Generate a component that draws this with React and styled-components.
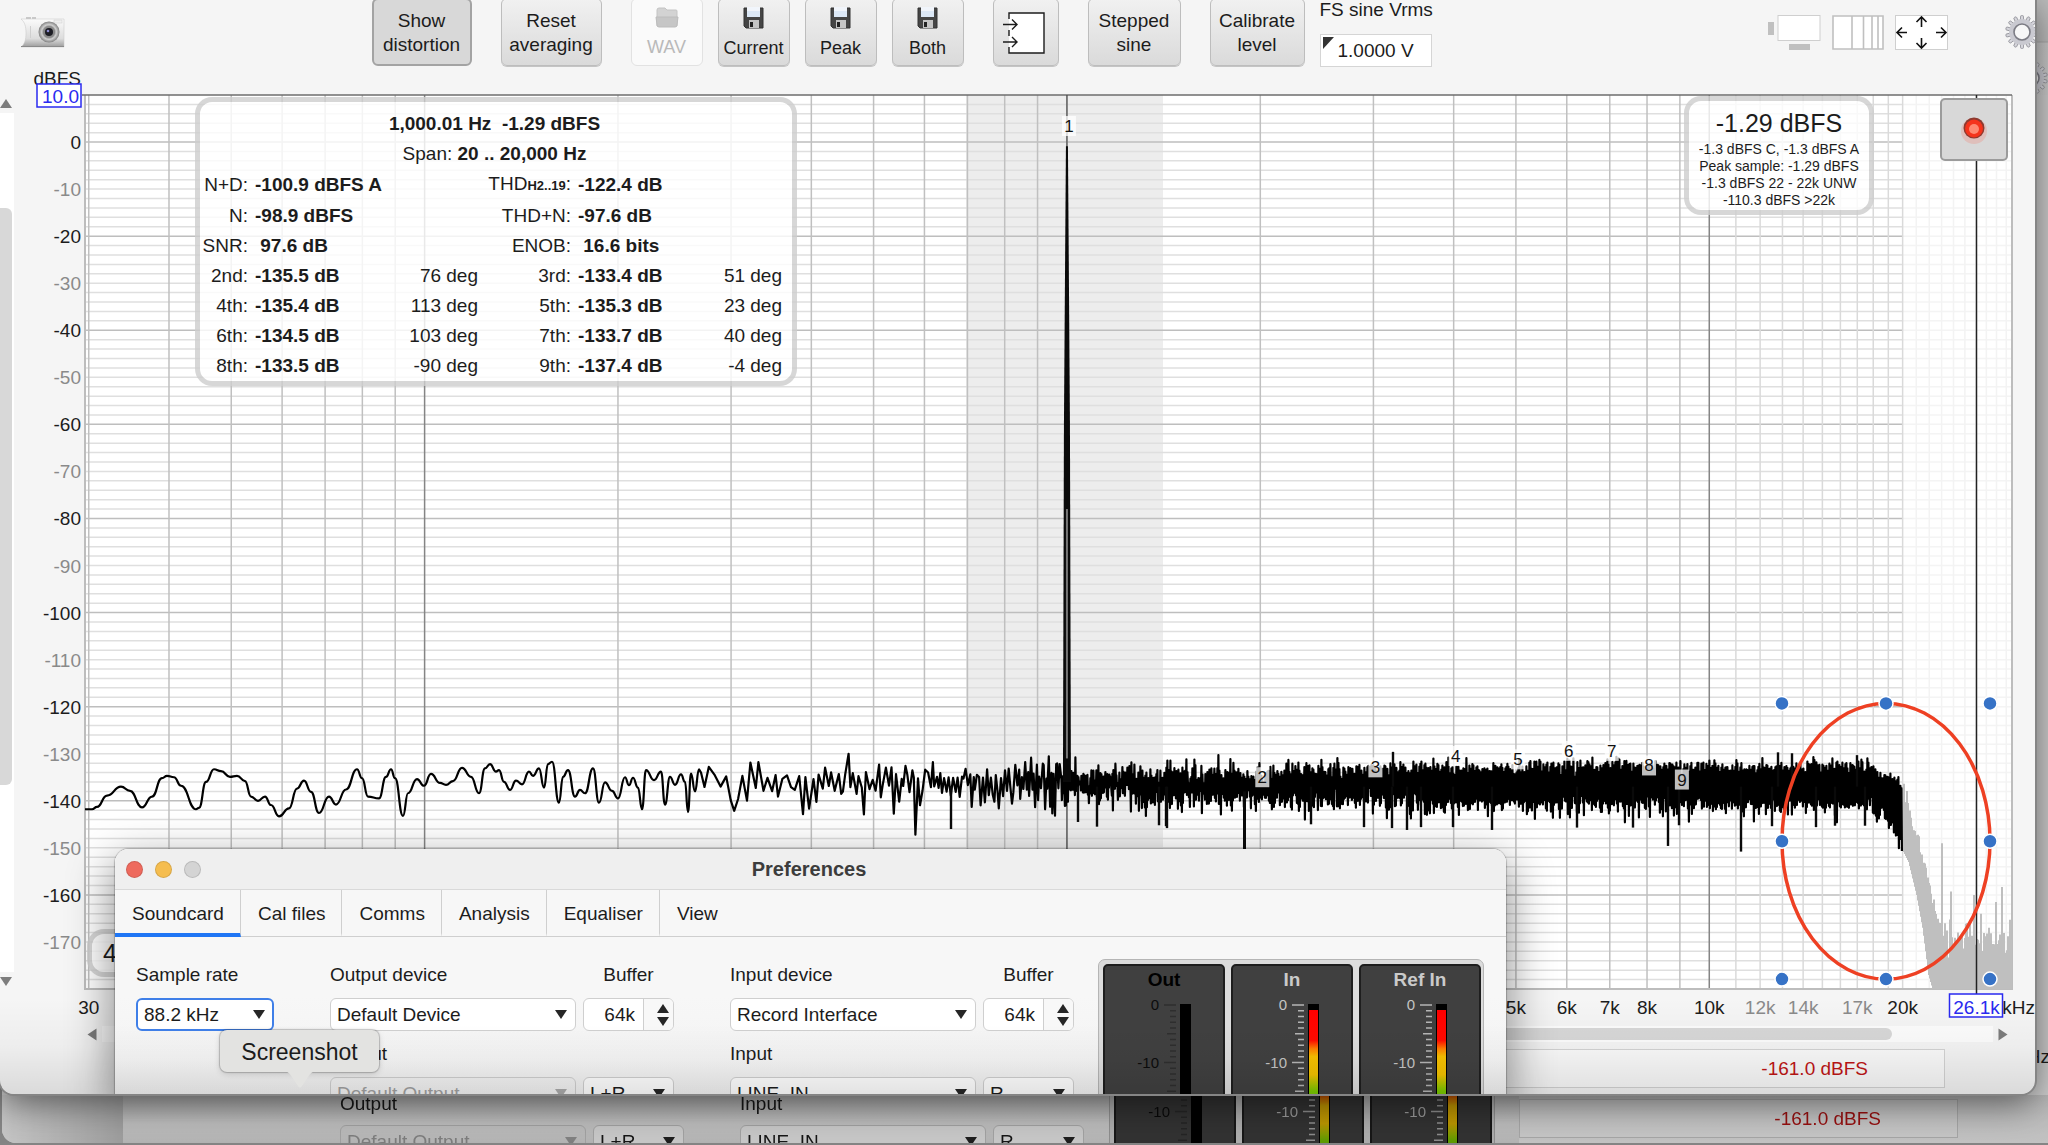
import React, { useEffect, useMemo, useRef, useState } from 'react'

import styled, { createGlobalStyle } from 'styled-components'

const GlobalStyle = createGlobalStyle`
  * {
    box-sizing: border-box;
  }
  body {
    margin: 0;
    overflow: hidden;
    background: #8c8c8c;
  }
  body, button, input, select {
    font-family: "Liberation Sans", Arial, sans-serif;
    font-size: 19px;
    color: #1c1c1c;
  }
  button {
    padding: 0;
  }
`

/* ---------- desktop and windows ---------- */

const Desktop = styled.div`
  position: relative;
  height: 100vh;
  overflow: hidden;
  background: #858585;
`

const RearWindow = styled.section`
  position: absolute;
  top: 0;
  left: 2px;
  right: 0;
  bottom: 2px;
  display: flex;
  flex-direction: column;
  justify-content: space-between;
  background: #cdcdcd;
  border-bottom-left-radius: 14px;
  overflow: hidden;
`

const RearTop = styled.div`
  align-self: flex-end;
  display: flex;
  flex-direction: column;
  align-items: flex-end;
  width: 40px;
  padding-top: 61px;
  background: linear-gradient(#bdbdbd 41px, #a9a9a9 42px, #c8c8c8 43px, #cdcdcd 120px);
`

const RearUnit = styled.div`
  position: absolute;
  right: -2px;
  bottom: 74px;
  line-height: 24px;
`

const RearStrip = styled.div`
  display: flex;
  height: 48px;
  overflow: hidden;
  filter: brightness(.78);
`

const RearCorner = styled.div`
  width: 121px;
  background: linear-gradient(to right, #fdfdfd, #c9c9c9);
`

const RearPreferences = styled.div`
  width: calc(100% - 650px);
  background: linear-gradient(#d8d8d8, #f2f2f2 60%, #e6e6e6);
`

const RearStatus = styled.div`
  flex: 1;
  padding: 4px 90px 0 0;
  background: linear-gradient(#e9e9e9, #fafafa);
`

const FrontWindow = styled.main`
  position: absolute;
  top: 0;
  left: 0;
  right: 13px;
  bottom: 51px;
  display: flex;
  flex-direction: column;
  background: #f5f5f5;
  border-radius: 0 0 14px 14px;
  overflow: hidden;
`

const WindowShadow = styled.div`
  position: absolute;
  top: 0;
  left: 0;
  right: 13px;
  bottom: 51px;
  border-radius: 0 0 14px 14px;
  box-shadow: 0 0 0 2px #858585, 0 8px 36px rgba(0, 0, 0, .55);
`

const Shade = styled.div`
  position: absolute;
  left: 0;
  right: 0;
  bottom: 0;
  height: ${p => p.$h}px;
  pointer-events: none;
  background: linear-gradient(transparent, rgba(0, 0, 0, .03) 50%, rgba(0, 0, 0, .11));
`

/* ---------- toolbar ---------- */

const Toolbar = styled.header`
  display: flex;
  height: 68px;
  padding-left: 21px;
  flex: none;
`

const PlainButton = styled.button`
  display: block;
  border: 0;
  background: none;
  line-height: 0;
`

const CameraButton = styled(PlainButton)`
  padding-top: 14px;
  align-self: flex-start;
`

const Tools = styled.div`
  display: flex;
  flex: 1;
  justify-content: center;
  gap: 29px;
  padding-right: 30px;
`

const SaveTools = styled.div`
  display: flex;
  gap: 15px;
`

const ToolButton = styled.button`
  display: flex;
  flex-direction: column;
  align-items: center;
  justify-content: center;
  width: ${p => p.$w}px;
  height: 68px;
  margin-top: -2px;
  padding-top: 2px;
  line-height: 24px;
  font-size: ${p => (p.$small ? 18 : 19)}px;
  border: ${p => (p.$on ? '2px solid #a3a3a3' : '1px solid #bdbdbd')};
  border-radius: 6px;
  background: ${p => (p.$on ? '#d8d8d8' : 'linear-gradient(#f1f1f1, #dadada)')};
  box-shadow: ${p => (p.$on ? 'none' : '0 1px 0 #c4c4c4')};
  &:disabled {
    color: #b9b9b9;
    background: #fafafa;
    border-color: #e2e2e2;
    box-shadow: none;
  }
  svg {
    margin-bottom: 7px;
  }
`

const IconOnly = styled(ToolButton)`
  padding-right: 4px;
  svg {
    margin: 0;
  }
`

const Vrms = styled.label`
  display: flex;
  flex-direction: column;
  justify-content: space-between;
  width: 112px;
  height: 67px;
  margin-left: -14px;
  line-height: 20px;
  white-space: nowrap;
`

const VrmsField = styled.span`
  display: block;
  position: relative;
  height: 33px;
  svg {
    position: absolute;
    left: 3px;
    top: 3px;
  }
`

const VrmsInput = styled.input`
  width: 100%;
  height: 33px;
  padding: 0 0 0 17px;
  border: 1px solid #d5d5d5;
  background: #fff;
`

const ViewTools = styled.div`
  display: flex;
  align-items: flex-start;
  gap: 11px;
  padding-top: 15px;
`

const GearButton = styled(PlainButton)`
  margin-left: 46px;
  width: 30px;
  overflow: hidden;
`

/* ---------- chart ---------- */

const ChartRow = styled.div`
  display: flex;
  flex: 1;
  min-height: 0;
`

const VScroll = styled.div`
  display: flex;
  flex-direction: column;
  width: 14px;
  padding: 31px 0 36px;
`

const VTrack = styled.div`
  flex: 1;
  margin: 5px 0;
  padding: 95px 2px 187px 0;
  background: #fff;
`

const Thumb = styled.div`
  height: 100%;
  width: 100%;
  border-radius: ${p => p.$radius};
  background: #d8d8d8;
`

const ChartArea = styled.div`
  position: relative;
  flex: 1;
  min-width: 0;
  svg {
    display: block;
  }
`

const Panel = styled.div`
  position: absolute;
  border: 5px solid rgba(205, 205, 205, .8);
  border-radius: 17px;
  background: rgba(255, 255, 255, .82);
  background-clip: padding-box;
`

const DistortionPanel = styled(Panel)`
  top: 29px;
  left: 181px;
  width: 602px;
  padding: 7px 10px 0 0;
`

const DistortionTable = styled.table`
  width: 100%;
  border-collapse: collapse;
  table-layout: fixed;
  white-space: nowrap;
  th, td {
    height: 30px;
    padding: 0;
    font-weight: 400;
    line-height: 30px;
    text-align: right;
  }
  caption {
    line-height: 30px;
    padding-left: 7px;
  }
  td.value {
    padding-left: 7px;
    font-weight: 700;
    text-align: left;
  }
  small {
    font-size: 13px;
    font-weight: 700;
  }
`

const LevelPanel = styled(Panel)`
  top: 28px;
  right: 161px;
  width: 190px;
  height: 119px;
  padding-top: 5px;
  text-align: center;
  font-size: 14px;
  line-height: 17px;
  white-space: nowrap;
  strong {
    display: block;
    font-size: 25px;
    font-weight: 400;
    line-height: 35px;
  }
`

const LegendPanel = styled(Panel)`
  left: 73px;
  bottom: 45px;
  width: 120px;
  height: 48px;
  padding-left: 11px;
  font-size: 25px;
  line-height: 38px;
`

const RecordButton = styled.button`
  position: absolute;
  top: 30px;
  right: 27px;
  width: 68px;
  height: 63px;
  border: 2px solid #9b9b9b;
  border-radius: 5px;
  background: #d8d8d8;
  svg {
    margin: 0 auto;
  }
`

const HScroll = styled.div`
  display: flex;
  align-items: center;
  gap: 4px;
  height: 24px;
  padding: 0 26px 0 86px;
  flex: none;
`

const HTrack = styled.div`
  flex: 1;
  height: 16px;
  padding: 2px 101px 2px 60px;
  background: #fdfdfd;
`

const StatusBar = styled.footer`
  flex: none;
  height: 48px;
  padding: 3px 90px 0 160px;
`

const StatusField = styled.output`
  display: flex;
  align-items: center;
  justify-content: flex-end;
  height: 39px;
  padding-right: 76px;
  border: 1px solid #d4d4d4;
  background: rgba(255, 255, 255, .6);
  color: #c01515;
`

/* ---------- preferences ---------- */

const PreferencesWindow = styled.section`
  position: absolute;
  left: 115px;
  right: 529px;
  bottom: 0;
  height: 245px;
  border-radius: 14px 14px 0 0;
  background: linear-gradient(#f7f7f7 60%, #f2f2f2);
  box-shadow: 0 0 1px 1px rgba(0, 0, 0, .22), 0 16px 44px 4px rgba(0, 0, 0, .42);
`

const TitleBar = styled.div`
  display: flex;
  align-items: center;
  height: 41px;
  padding-left: 11px;
  gap: 12px;
  border-bottom: 1px solid #d9d9d9;
  border-radius: 14px 14px 0 0;
  background: #efefef;
`

const Light = styled.button`
  width: 17px;
  height: 17px;
  border: 1px solid rgba(0, 0, 0, .12);
  border-radius: 50%;
  background: ${p => p.$color};
`

const WindowTitle = styled.h2`
  flex: 1;
  margin: 0;
  padding-right: 101px;
  text-align: center;
  font-size: 20px;
  line-height: 24px;
  font-weight: 700;
  color: #3c3c3c;
`

const Tabs = styled.nav`
  display: flex;
  height: 47px;
  border-bottom: 1px solid #cfcfcf;
`

const Tab = styled.button`
  height: 47px;
  padding: 4px 16px 0 17px;
  border: 0;
  border-right: ${p => (p.$last ? '0' : '1px solid #cfcfcf')};
  border-bottom: 4px solid ${p => (p.$active ? '#1f76f5' : 'transparent')};
  background: none;
`

const PrefsBody = styled.div`
  display: flex;
  height: ${p => (p.$rear ? 48 : 157)}px;
  overflow: hidden;
  padding: ${p => (p.$rear ? '0 24px 0 23px' : '26px 22px 0 21px')};
`

const Fields = styled.div`
  display: grid;
  grid-template-columns: ${p => p.$cols};
  grid-auto-rows: max-content;
  gap: ${p => (p.$rear ? '12px 7px' : '11px 7px')};
  margin-right: 56px;
  &:nth-of-type(3) {
    margin-right: 0;
  }
`

const FieldLabel = styled.label`
  line-height: ${p => (p.$rear ? 18 : 24)}px;
  text-align: ${p => p.$align || 'left'};
  height: ${p => (p.$rear ? 18 : 24)}px;
`

const SelectBox = styled.span`
  position: relative;
  display: block;
  svg {
    position: absolute;
    right: 9px;
    top: 12px;
    pointer-events: none;
    opacity: ${p => (p.$off ? .35 : 1)};
  }
`

const Select = styled.select`
  appearance: none;
  width: 100%;
  height: 33px;
  padding: 0 6px;
  border: ${p => (p.$focus ? '2px solid #3f7fe8' : '1px solid #cfcfcf')};
  border-radius: 6px;
  background: ${p => (p.disabled ? 'transparent' : '#fff')};
  opacity: 1;
  color: ${p => (p.disabled ? '#a0a0a0' : '#1c1c1c')};
`

const Spinner = styled.span`
  display: flex;
  height: 33px;
  border: 1px solid #cfcfcf;
  border-radius: 6px;
  background: #fff;
  overflow: hidden;
`

const SpinnerInput = styled.input`
  flex: 1;
  min-width: 0;
  border: 0;
  padding: 0 8px 0 0;
  text-align: right;
  background: none;
`

const SpinnerButtons = styled.span`
  display: flex;
  flex-direction: column;
  justify-content: center;
  gap: 4px;
  width: 30px;
  padding-left: 8px;
  border-left: 1px solid #cfcfcf;
  background: #f8f8f8;
`

const Meters = styled.div`
  display: flex;
  gap: 6px;
  width: 386px;
  height: 240px;
  margin: ${p => (p.$rear ? '-87px' : '-4px')} 0 0 auto;
  padding: 4px;
  border: 1px solid #b5b5b5;
  border-radius: 7px;
  background: #dcdcdc;
  flex: none;
`

const MeterBox = styled.div`
  flex: 1;
  border: 2px solid #1e1e1e;
  border-radius: 5px;
  background: #404040;
  color: ${p => (p.$off ? '#000' : '#cacaca')};
  h3 {
    margin: 0;
    padding-top: 1px;
    font-size: 19px;
    line-height: 26px;
    text-align: center;
  }
  svg {
    display: block;
  }
`

const Tooltip = styled.div`
  position: absolute;
  left: 220px;
  bottom: 73px;
  width: 159px;
  height: 42px;
  font-size: 23px;
  line-height: 44px;
  text-align: center;
  border-radius: 7px;
  background: #e3e3e1;
  box-shadow: 0 0 1px 1px rgba(0, 0, 0, .2), 0 2px 6px rgba(0, 0, 0, .15);
  svg {
    position: absolute;
    left: 65px;
    top: 41px;
  }
`

/* ---------- icons ---------- */

const Camera = () => (
  <svg width="44" height="34" viewBox="0 0 44 34">
    <defs>
      <linearGradient id="body" x1="0" y1="0" x2="0" y2="1">
        <stop offset="0" stopColor="#fbfbfb" />
        <stop offset=".7" stopColor="#dcdcdc" />
        <stop offset="1" stopColor="#9c9c9c" />
      </linearGradient>
      <radialGradient id="lens">
        <stop offset="0" stopColor="#777" />
        <stop offset=".55" stopColor="#9a9a9a" />
        <stop offset=".7" stopColor="#cfcfcf" />
        <stop offset="1" stopColor="#808080" />
      </radialGradient>
    </defs>
    <path d="M5 3h5v2H5zM11 3h4v2h-4z" fill="#c9c9c9" />
    <path d="M0 5h43v28H0c4-3 5-8 5-14S4 8 0 5z" fill="url(#body)" stroke="#c4c4c4" strokeWidth=".5" />
    <path d="M0 32.500h43" stroke="#8a8a8a" />
    <path d="M9.500 12v12" stroke="#cfcfcf" />
    <rect x="33" y="6" width="8" height="3" fill="#efefef" stroke="#ccc" strokeWidth=".5" />
    <circle cx="28" cy="18" r="10.500" fill="url(#lens)" />
    <circle cx="28" cy="18" r="6" fill="#8a8a8a" />
    <circle cx="28" cy="18" r="4" fill="#1d1d24" />
    <circle cx="27" cy="17" r="1.300" fill="#8b8bd0" />
  </svg>
)

const Floppy = () => (
  <svg width="21" height="22" viewBox="0 0 21 22">
    <path d="M1 1h19v20H3l-2-2z" fill="#454545" stroke="#333" />
    <rect x="4" y="0" width="13" height="10" fill="#dce8f6" />
    <path d="M4 0h13v4H4z" fill="#f1f5fb" />
    <rect x="6" y="13" width="10" height="8" fill="#c5c5c5" />
    <rect x="7" y="15" width="3" height="5" fill="#222" />
  </svg>
)

const Folder = () => (
  <svg width="24" height="21" viewBox="0 0 24 21">
    <path d="M2 19V3q0-2 2-2h6l2 2h9q1 0 1 1v15z" fill="#d3d3d3" stroke="#c4c4c4" />
    <path d="M1 10h22l-1 8q0 2-2 2H4q-2 0-2-2z" fill="#c6c6c6" stroke="#bcbcbc" />
  </svg>
)

const InputsIcon = () => (
  <svg width="42" height="42" viewBox="0 0 42 42" fill="none" stroke="#1c1c1c" strokeWidth="1.400">
    <rect x="6" y="1" width="35" height="40" fill="#fff" stroke="none" />
    <path d="M6 7V1h35v40H6v-6M6 18v6" />
    <path d="M0 12.500h14M9 7.500l5 5-5 5M0 30h14M9 25l5 5-5 5" />
  </svg>
)

const ScrollbarsIcon = () => (
  <svg width="53" height="36" viewBox="0 0 53 36">
    <rect x="0" y="7" width="6" height="13" fill="#c0c0c0" />
    <rect x="10" y=".5" width="42" height="25" fill="#fff" stroke="#cfcfcf" />
    <rect x="21" y="29" width="21" height="6" fill="#c0c0c0" />
  </svg>
)

const LogAxisIcon = () => (
  <svg width="52" height="36" viewBox="0 0 52 36">
    <rect x="1" y="1" width="50" height="33" fill="#fff" />
    <path d="M1 1h50v33H1zM20 1v33M31.500 1v33M40 1v33M46 1v33" fill="none" stroke="#c0c0c0" strokeWidth="1.600" />
  </svg>
)

const LimitsIcon = () => (
  <svg width="53" height="36" viewBox="0 0 53 36" fill="none">
    <rect x=".5" y=".5" width="52" height="34" fill="#fff" stroke="#cfcfcf" />
    <path
      d="M26.500 12V2M21.500 7l5-5 5 5M26.500 23v10M21.500 28l5 5 5-5M12 17.500H2M7 12.500l-5 5 5 5M41 17.500h10M46 12.500l5 5-5 5"
      stroke="#111" strokeWidth="1.600"
    />
  </svg>
)

const Gear = () => (
  <svg width="34" height="34" viewBox="0 0 34 34">
    <g fill="#d6d6dc" stroke="#8d8d94" strokeWidth=".8">
      {Array.from({ length: 14 }, (_, i) => (
        <rect key={i} x="15.500" y=".6" width="3" height="7" rx="1" transform={`rotate(${i * 360 / 14} 17 17)`} />
      ))}
    </g>
    <circle cx="17" cy="17" r="10.500" fill="none" stroke="#c9c9d0" strokeWidth="5" />
    <circle cx="17" cy="17" r="8" fill="#f7f7f7" stroke="#7c7c84" strokeWidth="1.600" />
  </svg>
)

const Arrow = ({ dir = 'down', color = '#262626', size = 12 }) => {
  const turn = { down: 0, left: 90, up: 180, right: 270 }[dir]
  return (
    <svg width={size} height={size - 3} viewBox="0 0 12 9" overflow="visible" aria-hidden="true">
      <path d="M0 0h12L6 9z" fill={color} transform={`rotate(${turn} 6 4.500)`} />
    </svg>
  )
}

/* ---------- spectrum ---------- */

// low end of the averaged spectrum, [position in a 1927 wide plot, dBFS]
const LOW_END = [
  [0, -141.8], [7, -141.8], [12, -141.3], [22, -138.9], [36, -137], [45, -137.9], [57, -141.4], [67, -139.1],
  [77, -135.2], [82, -134.7], [89, -135], [96, -136.8], [111, -141.8], [114, -141.5], [121, -136], [129, -133.3],
  [136, -133.7], [145, -134.9], [152, -134.7], [160, -135.8], [166, -139.1], [173, -140], [180, -139.1], [186, -140.9],
  [194, -143.3], [204, -141.6], [212, -137.4], [219, -135.7], [226, -138.1], [234, -142.6], [244, -139.1], [251, -140.8],
  [261, -137.6], [272, -133.3], [277, -135.2], [283, -139.1], [294, -139.5], [301, -134.9], [306, -133.3], [310, -135.2],
  [318, -143.2], [323, -138.4], [332, -135.4], [339, -136.8], [346, -134.3], [355, -136.2], [361, -136.6], [368, -135.8],
  [377, -133], [386, -134.9], [394, -138.4], [400, -133.1], [405, -132.2], [411, -133.8], [414, -133.5], [419, -136],
  [425, -137.7], [431, -135.7], [437, -136.5], [444, -133.8], [448, -134.7], [454, -133.1], [459, -137.2], [463, -132.2],
  [467, -131.7], [474, -140.4], [478, -134.9], [483, -133.5], [490, -139.1], [495, -137.7], [500, -138.4], [508, -133.1],
  [514, -140.4], [520, -136.1], [527, -137.9], [533, -139.5], [540, -135], [544, -136.7], [548, -135.1], [553, -137.2],
  [557, -141.8], [561, -133.5], [569, -135.6], [576, -133.8], [580, -140.8], [585, -134.9], [590, -136.6], [596, -134.4],
  [600, -136], [603, -142.4], [606, -134.2], [610, -138], [614, -133.3]
]

// single deep or tall bins that stand out of the noise
const SPURS = [
  [866, -146], [993, -144.5], [1012, -145.5], [1074, -145.2], [1081, -145.4], [1082, -145.8], [1226, -145],
  [1279, -145.6], [1307, -145.8], [1322, -146.2], [1336, -145.6], [1368, -145.6], [1407, -146.2], [1492, -145.7],
  [1548, -145.7], [1583, -149.6], [1594, -145.2], [1656, -150.8], [1687, -145.4], [1731, -145.6], [1750, -145.3],
  [1780, -145.3], [1308, -129.6], [1693, -129.7], [1707, -129.9], [1772, -130.3]
]

const random = seed => () => {
  seed = (seed * 1664525 + 1013904223) % 4294967296
  return seed / 4294967296
}

const buildNoise = () => {
  const rnd = random(77)
  const gauss = () => {
    let s = 0
    for (let i = 0; i < 6; i++) s += rnd()
    return (s - 3) * 1.41
  }
  const level = (up, down) => {
    const g = gauss()
    return -136.4 + (g > 0 ? g * up : g * down)
  }
  const points = []
  let x = 616
  let side = 1
  while (x < 1817) {
    const step = 5 * Math.pow(10, -(x - 600) / 642)
    if (step > 1.3) {
      // turning points alternate between the two sides of the mean
      const swing = Math.abs(gauss())
      points.push([x, -136 + (side > 0 ? 0.4 + swing * 2.2 : -0.6 - swing * 3.1)])
      side = rnd() > 0.15 ? -side : side
      x += step * (0.6 + rnd() * 0.8)
    } else {
      const count = Math.min(16, Math.ceil(3 / step))
      const set = Array.from({ length: count }, () => level(1.8, 2.4))
      const fall = Math.max(0, x - 1778) / 39
      points.push([x, Math.max(...set) - fall * 3.500 + (x > 1200 ? 0.3 : 0)])
      points.push([x + 0.5, Math.min(...set) - fall * fall * 9])
      x += 1
    }
  }
  return points
}

const buildFloor = () => {
  const rnd = random(5)
  const tops = [[1817, -136], [1824, -141], [1834, -147], [1842, -155], [1850, -163], [1858, -167], [1870, -168], [1927, -168]]
  const bottoms = [[1817, -150], [1824, -153], [1832, -160], [1838, -167], [1844, -177], [1848, -180], [1927, -180]]
  const spikes = { 1857: -149, 1860: -166, 1866: -159.3, 1873: -168, 1882: -166, 1889: -160, 1896: -164, 1904: -167, 1911: -161.5, 1917: -158.3, 1925: -165.3, 1849: -161 }
  const at = (list, x) => {
    const i = Math.max(1, list.findIndex(p => p[0] >= x))
    const [a, b] = [list[i - 1], list[i]]
    return a[1] + (b[1] - a[1]) * (x - a[0]) / (b[0] - a[0])
  }
  const bars = []
  for (let x = 1818; x < 1927; x++) {
    const rough = x > 1850 ? 6 : 3
    bars.push([x, spikes[x] || at(tops, x) - rnd() * rough + (rnd() > .85 ? rough * .6 : 0), at(bottoms, x)])
  }
  return bars
}

const smooth = pts => {
  let d = `M${pts[0][0]} ${pts[0][1]}`
  for (let i = 0; i < pts.length - 1; i++) {
    const a = pts[i]
    const b = pts[i + 1]
    const mid = (a[0] + b[0]) / 2
    d += `C${mid} ${a[1]} ${mid} ${b[1]} ${b[0]} ${b[1]}`
  }
  return d
}

const X_LABELS = [
  [30, '30'], [5000, '5k'], [6000, '6k'], [7000, '7k'], [8000, '8k'], [10000, '10k'],
  [12000, '12k', true], [14000, '14k', true], [17000, '17k', true], [20000, '20k']
]

const HARMONICS = [[1, 3.2], [2, -135.2], [3, -133.1], [4, -130.7], [5, -131.4], [6, -129.6], [7, -129.6], [8, -132.7], [9, -135.7]]

const Spectrum = ({ width, height }) => {
  const left = 71
  const right = width - 23
  const top = 27
  const bottom = height - 33
  const w = right - left
  const px = u => left + u * w / 1927
  const fx = f => left + Math.log10(f / 29.6) / 3 * w
  const dy = db => top + (10 - db) / 190 * (bottom - top)

  const noise = useMemo(buildNoise, [])
  const floor = useMemo(buildFloor, [])

  const freqs = []
  for (let f = 30; f < 29600; f += Math.pow(10, Math.floor(Math.log10(f) + 1e-9))) {
    if (f < 10000) freqs.push(Math.round(f))
  }
  for (let f = 10000; f < 29600; f += 1000) freqs.push(f)
  const levels = Array.from({ length: 94 }, (_, i) => 8 - i * 2)
  const limit = fx(20000)

  const vColor = f => {
    if (f === 100 || f === 10000) return '#858585'
    if (f > 20000) return '#f3f3f3'
    if (f > 10000) return '#dadada'
    return '#c0c0c0'
  }

  const line = noise.map(([x, db]) => `L${px(x).toFixed(1)} ${dy(db).toFixed(1)}`).join('')
  const low = smooth(LOW_END.map(([x, db]) => [px(x), dy(db)]))
  const peak = fx(1000)
  const cursor = px(1891.5)
  const cx = px(1801)
  const ey = [dy(-119.3), dy(-148.6), dy(-177.9)]
  const ex = [cx - 104, cx, cx + 104]

  return (
    <svg width={width} height={height} fontSize="19">
      <text x={67} y={17} textAnchor="end" fill="#1c1c1c">dBFS</text>
      <rect x={left} y={top} width={w} height={bottom - top} fill="#fff" />
      <rect x={px(881)} y={top} width={px(1078) - px(881)} height={bottom - top} fill="#ededed" />
      {levels.map(db => (
        <g key={db}>
          <line x1={left} x2={limit} y1={dy(db)} y2={dy(db)} stroke={db % 20 === 0 ? '#bebebe' : '#dfdfdf'} strokeWidth="1.500" />
          <line x1={limit} x2={right} y1={dy(db)} y2={dy(db)} stroke="#f4f4f4" strokeWidth="1.500" />
        </g>
      ))}
      {freqs.map(f => (
        <line key={f} x1={fx(f)} x2={fx(f)} y1={top} y2={bottom} stroke={vColor(f)} strokeWidth="1.500" />
      ))}
      <path d={`M${left} ${top}V${bottom}H${right}V${top}`} fill="none" stroke="#bdbdbd" strokeWidth="2" />
      <line x1={left - 3} x2={right} y1={top} y2={top} stroke="#6c6c6c" strokeWidth="1.600" />
      <line x1={peak} x2={peak} y1={top} y2={bottom} stroke="#4a4a4a" strokeWidth="1.200" />

      {floor.map(([x, a, b]) => (
        <line key={x} x1={px(x)} x2={px(x)} y1={dy(a)} y2={dy(b)} stroke="#bfbfbf" strokeWidth="2" />
      ))}
      <path d={low + line} fill="none" stroke="#000" strokeWidth="2.200" strokeLinejoin="round" />
      {SPURS.map(([x, db]) => (
        <line key={x} x1={px(x)} x2={px(x)} y1={dy(-137)} y2={dy(db)} stroke="#0a0a0a" strokeWidth="2.400" />
      ))}
      <line x1={px(1159.5)} x2={px(1159.5)} y1={dy(-138)} y2={dy(-165)} stroke="#0a0a0a" strokeWidth="3" />
      <path
        d={`M${peak - 1} ${dy(-0.9)}h2L${peak + 2} ${dy(-30)}L${peak + 3} ${dy(-60)}L${peak + 4} ${dy(-136)}h-8L${peak - 3} ${dy(-60)}L${peak - 2} ${dy(-30)}z`}
        fill="#0a0a0a"
      />
      <line x1={peak} x2={peak} y1={dy(-78)} y2={dy(-131)} stroke="#777" strokeWidth="2" />

      {HARMONICS.map(([n, db]) => {
        const x = fx(n * 1000)
        return (
          <g key={n}>
            <rect x={x - 5} y={dy(db) - 11} width="14" height="20" fill="rgba(255,255,255,.75)" />
            <text x={x + 2} y={dy(db) + 5} fontSize="17" textAnchor="middle" fill="#111">{n}</text>
          </g>
        )
      })}

      <line x1={cursor} x2={cursor} y1={top} y2={bottom + 6} stroke="#222" strokeWidth="1.500" />

      {Array.from({ length: 18 }, (_, i) => -i * 10).map(db => (
        <text key={db} x={67} y={dy(db) + 7} textAnchor="end" fill={db % 20 === 0 ? '#1c1c1c' : '#8a8a8a'}>{db}</text>
      ))}
      <rect x="23" y="16" width="44" height="23" fill="#fff" stroke="#2a2af0" strokeWidth="1.500" />
      <text x="65" y="35" textAnchor="end" fill="#2a2af0">10.0</text>

      {X_LABELS.map(([f, label, minor]) => (
        <text key={f} x={fx(f)} y={bottom + 25} textAnchor="middle" fill={minor ? '#8a8a8a' : '#1c1c1c'}>{label}</text>
      ))}
      <text x={width} y={bottom + 25} textAnchor="end" fill="#1c1c1c">6kHz</text>
      <rect x={cursor - 27} y={bottom + 5} width="53" height="23" fill="#fff" stroke="#2a2af0" strokeWidth="1.500" />
      <text x={cursor} y={bottom + 25} textAnchor="middle" fill="#2a2af0">26.1k</text>

      <ellipse cx={cx} cy={ey[1]} rx="104" ry={(ey[2] - ey[0]) / 2} fill="none" stroke="#ee4023" strokeWidth="3.500" />
      {ex.map(x => ey.map(y => (x === cx && y === ey[1] ? null : (
        <circle key={`${x} ${y}`} cx={x} cy={y} r="7" fill="#3672c6" stroke="#fff" strokeWidth="1.500" />
      ))))}
    </svg>
  )
}

const useSize = ref => {
  const [size, setSize] = useState(null)
  useEffect(() => {
    const measure = () => setSize([ref.current.clientWidth, ref.current.clientHeight])
    measure()
    window.addEventListener('resize', measure)
    return () => window.removeEventListener('resize', measure)
  }, [ref])
  return size
}

const DISTORTION = [
  ['N+D:', '-100.9 dBFS A', '', <>THD<small>H2..19</small>:</>, '-122.4 dB', ''],
  ['N:', '-98.9 dBFS', '', 'THD+N:', '-97.6 dB', ''],
  ['SNR:', '\u00a097.6 dB', '', 'ENOB:', '\u00a016.6 bits', ''],
  ['2nd:', '-135.5 dB', '76 deg', '3rd:', '-133.4 dB', '51 deg'],
  ['4th:', '-135.4 dB', '113 deg', '5th:', '-135.3 dB', '23 deg'],
  ['6th:', '-134.5 dB', '103 deg', '7th:', '-133.7 dB', '40 deg'],
  ['8th:', '-133.5 dB', '-90 deg', '9th:', '-137.4 dB', '-4 deg']
]

const Chart = () => {
  const ref = useRef(null)
  const size = useSize(ref)
  return (
    <ChartArea ref={ref}>
      {size && <Spectrum width={size[0]} height={size[1]} />}
      <DistortionPanel>
        <DistortionTable>
          <caption>
            <b>1,000.01 Hz&nbsp; -1.29 dBFS</b><br />
            Span: <b>20 .. 20,000 Hz</b>
          </caption>
          <colgroup>
            <col style={{ width: 48 }} />
            <col style={{ width: 150 }} />
            <col style={{ width: 80 }} />
            <col style={{ width: 93 }} />
            <col style={{ width: 120 }} />
            <col />
          </colgroup>
          <tbody>
            {DISTORTION.map((row, i) => (
              <tr key={i}>
                <th scope="row">{row[0]}</th>
                <td className="value">{row[1]}</td>
                <td>{row[2]}</td>
                <th scope="row">{row[3]}</th>
                <td className="value">{row[4]}</td>
                <td>{row[5]}</td>
              </tr>
            ))}
          </tbody>
        </DistortionTable>
      </DistortionPanel>
      <LevelPanel>
        <strong>-1.29 dBFS</strong>
        -1.3 dBFS C, -1.3 dBFS A<br />
        Peak sample: -1.29 dBFS<br />
        -1.3 dBFS 22 - 22k UNW<br />
        -110.3 dBFS &gt;22k
      </LevelPanel>
      <RecordButton aria-label="Record">
        <svg width="30" height="34" viewBox="0 0 30 34">
          <circle cx="15" cy="18" r="13" fill="#ff5038" opacity=".18" />
          <circle cx="15" cy="15" r="10.500" fill="#8d3a30" />
          <circle cx="15" cy="15.500" r="9" fill="#f5341c" />
          <circle cx="15" cy="16" r="5" fill="#ff8a72" />
        </svg>
      </RecordButton>
      <LegendPanel>4</LegendPanel>
    </ChartArea>
  )
}

/* ---------- preferences content ---------- */

const Choice = ({ id, value, focus, off }) => (
  <SelectBox $off={off}>
    <Select id={id} aria-label={id} defaultValue={value} disabled={off} $focus={focus}>
      <option>{value}</option>
    </Select>
    <Arrow />
  </SelectBox>
)

const BufferField = ({ id }) => (
  <Spinner>
    <SpinnerInput id={id} defaultValue="64k" />
    <SpinnerButtons>
      <PlainButton aria-label="Increase"><Arrow dir="up" /></PlainButton>
      <PlainButton aria-label="Decrease"><Arrow /></PlainButton>
    </SpinnerButtons>
  </Spinner>
)

const Meter = ({ title, off, id }) => (
  <MeterBox $off={off}>
    <h3>{title}</h3>
    <svg width="118" height="160" viewBox="0 0 118 160" fontSize="15">
      <defs>
        <linearGradient id={id} x1="0" y1="0" x2="0" y2="1">
          <stop offset="0" stopColor="#f00" />
          <stop offset=".28" stopColor="#ff0a00" />
          <stop offset=".36" stopColor="#ff8000" />
          <stop offset=".43" stopColor="#f5be00" />
          <stop offset=".6" stopColor="#f0c000" />
          <stop offset=".75" stopColor="#7cc800" />
          <stop offset="1" stopColor="#50c000" />
        </linearGradient>
      </defs>
      {Array.from({ length: 26 }, (_, i) => (
        <line
          key={i}
          x1={i % 10 === 0 ? 59 : i % 5 === 0 ? 62 : 65} x2="71"
          y1={12 + i * 5.75} y2={12 + i * 5.75}
          stroke={off ? '#2e2e2e' : '#b4b4b4'} strokeWidth="1.500"
        />
      ))}
      {[0, 10, 20].map(v => (
        <text key={v} x="54" y={17 + v * 5.75} textAnchor="end" fill={off ? '#0c0c0c' : '#c4c4c4'}>{v ? -v : 0}</text>
      ))}
      <rect x="75" y="11" width="11" height="149" fill="#000" />
      {!off && <rect x="76" y="17" width="9" height="108" fill={`url(#${id})`} />}
      {!off && <rect x="76" y="125" width="9" height="35" fill="#50c000" />}
    </svg>
  </MeterBox>
)

const PreferencesFields = ({ rear }) => {
  const key = rear ? 'rear' : 'front'
  return (
    <PrefsBody $rear={rear}>
      <Fields $cols="138px" $rear={rear}>
        {!rear && (
          <>
            <FieldLabel htmlFor="sample-rate">Sample rate</FieldLabel>
            <Choice id="sample-rate" value="88.2 kHz" focus />
          </>
        )}
      </Fields>
      <Fields $cols="246px 91px" $rear={rear}>
        {!rear && (
          <>
            <FieldLabel htmlFor="output-device">Output device</FieldLabel>
            <FieldLabel htmlFor="output-buffer" $align="center">Buffer</FieldLabel>
            <Choice id="output-device" value="Default Device" />
            <BufferField id="output-buffer" />
          </>
        )}
        <FieldLabel htmlFor={`${key}-output`} $rear={rear}>Output</FieldLabel>
        <span />
        <Choice id={`${key}-output`} value="Default Output" off />
        <Choice id={`${key}-output-channel`} value="L+R" />
      </Fields>
      <Fields $cols="246px 91px" $rear={rear}>
        {!rear && (
          <>
            <FieldLabel htmlFor="input-device">Input device</FieldLabel>
            <FieldLabel htmlFor="input-buffer" $align="center">Buffer</FieldLabel>
            <Choice id="input-device" value="Record Interface" />
            <BufferField id="input-buffer" />
          </>
        )}
        <FieldLabel htmlFor={`${key}-input`} $rear={rear}>Input</FieldLabel>
        <span />
        <Choice id={`${key}-input`} value="LINE_IN" />
        <Choice id={`${key}-input-channel`} value="R" />
      </Fields>
      <Meters $rear={rear}>
        <Meter title="Out" off id={`${key}-m1`} />
        <Meter title="In" id={`${key}-m2`} />
        <Meter title="Ref In" id={`${key}-m3`} />
      </Meters>
    </PrefsBody>
  )
}

const TABS = ['Soundcard', 'Cal files', 'Comms', 'Analysis', 'Equaliser', 'View']

const Preferences = () => (
  <PreferencesWindow>
    <TitleBar>
      <Light $color="#ee6a5e" aria-label="Close" />
      <Light $color="#f5bd4f" aria-label="Minimise" />
      <Light $color="#d4d4d4" aria-label="Zoom" />
      <WindowTitle>Preferences</WindowTitle>
    </TitleBar>
    <Tabs>
      {TABS.map((tab, i) => (
        <Tab key={tab} $active={i === 0} $last={i === TABS.length - 1}>{tab}</Tab>
      ))}
    </Tabs>
    <PreferencesFields />
    <Shade $h={70} />
  </PreferencesWindow>
)

const App = () => {
  return (
    <Desktop>
      <GlobalStyle />
      <RearWindow>
        <RearTop><Gear /></RearTop>
        <RearUnit>Hz</RearUnit>
        <RearStrip>
          <RearCorner />
          <RearPreferences><PreferencesFields rear /></RearPreferences>
          <RearStatus><StatusField>-161.0 dBFS</StatusField></RearStatus>
        </RearStrip>
      </RearWindow>
      <WindowShadow />
      <FrontWindow>
        <Toolbar>
          <CameraButton aria-label="Capture"><Camera /></CameraButton>
          <Tools>
            <ToolButton $w={100} $on>Show<br />distortion</ToolButton>
            <ToolButton $w={101}>Reset<br />averaging</ToolButton>
            <SaveTools>
              <ToolButton $w={72} $small disabled><Folder />WAV</ToolButton>
              <ToolButton $w={72} $small><Floppy />Current</ToolButton>
              <ToolButton $w={72} $small><Floppy />Peak</ToolButton>
              <ToolButton $w={72} $small><Floppy />Both</ToolButton>
            </SaveTools>
            <IconOnly $w={66} aria-label="Inputs"><InputsIcon /></IconOnly>
            <ToolButton $w={93}>Stepped<br />sine</ToolButton>
            <ToolButton $w={95}>Calibrate<br />level</ToolButton>
            <Vrms>
              FS sine Vrms
              <VrmsField>
                <VrmsInput defaultValue="1.0000 V" />
                <svg width="11" height="12" viewBox="0 0 11 12"><path d="M0 0h11L0 12z" fill="#333" /></svg>
              </VrmsField>
            </Vrms>
          </Tools>
          <ViewTools>
            <PlainButton aria-label="Scrollbars"><ScrollbarsIcon /></PlainButton>
            <PlainButton aria-label="Frequency axis"><LogAxisIcon /></PlainButton>
            <PlainButton aria-label="Limits"><LimitsIcon /></PlainButton>
            <GearButton aria-label="Settings"><Gear /></GearButton>
          </ViewTools>
        </Toolbar>
        <ChartRow>
          <VScroll>
            <Arrow dir="up" color="#7d7d7d" />
            <VTrack><Thumb $radius="0 6px 6px 0" /></VTrack>
            <Arrow color="#7d7d7d" />
          </VScroll>
          <Chart />
        </ChartRow>
        <HScroll>
          <Arrow dir="left" color="#7d7d7d" />
          <HTrack><Thumb $radius="6px" /></HTrack>
          <Arrow dir="right" color="#7d7d7d" />
        </HScroll>
        <StatusBar><StatusField>-161.0 dBFS</StatusField></StatusBar>
        <Shade $h={96} />
        <Preferences />
      </FrontWindow>
      <Tooltip role="tooltip">
        Screenshot
        <svg width="30" height="18" viewBox="0 0 30 18"><path d="M0 0h30q-4 1-7 6l-6 9q-2 3-4 0L7 6Q4 1 0 0z" fill="#e3e3e1" /></svg>
      </Tooltip>
    </Desktop>
  )
}

export default App
